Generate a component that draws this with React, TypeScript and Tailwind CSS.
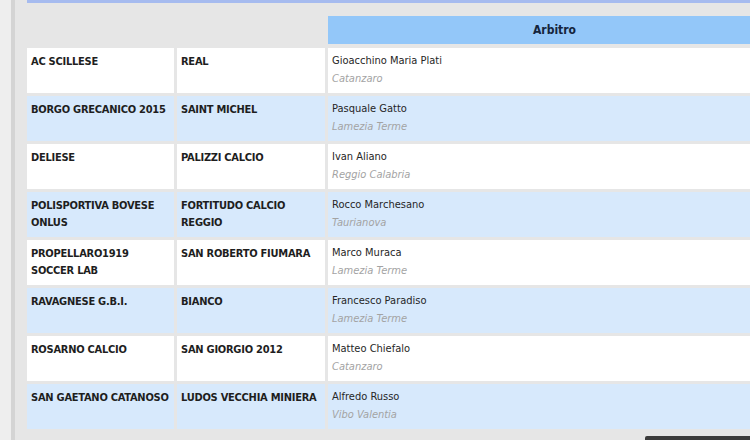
import React from "react";

const rows = [
  { home: ["AC SCILLESE"], away: ["REAL"], ref: "Gioacchino Maria Plati", city: "Catanzaro" },
  { home: ["BORGO GRECANICO 2015"], away: ["SAINT MICHEL"], ref: "Pasquale Gatto", city: "Lamezia Terme" },
  { home: ["DELIESE"], away: ["PALIZZI CALCIO"], ref: "Ivan Aliano", city: "Reggio Calabria" },
  { home: ["POLISPORTIVA BOVESE", "ONLUS"], away: ["FORTITUDO CALCIO", "REGGIO"], ref: "Rocco Marchesano", city: "Taurianova" },
  { home: ["PROPELLARO1919", "SOCCER LAB"], away: ["SAN ROBERTO FIUMARA"], ref: "Marco Muraca", city: "Lamezia Terme" },
  { home: ["RAVAGNESE G.B.I."], away: ["BIANCO"], ref: "Francesco Paradiso", city: "Lamezia Terme" },
  { home: ["ROSARNO CALCIO"], away: ["SAN GIORGIO 2012"], ref: "Matteo Chiefalo", city: "Catanzaro" },
  { home: ["SAN GAETANO CATANOSO"], away: ["LUDOS VECCHIA MINIERA"], ref: "Alfredo Russo", city: "Vibo Valentia" },
];

export default function App() {
  return (
    <div
      className="relative w-[750px] h-[440px] overflow-hidden flex bg-[#e6e6e6]"
      style={{ fontFamily: "'DejaVu Sans Condensed', 'DejaVu Sans', sans-serif" }}
    >
      <div className="w-[11px] shrink-0 bg-[#eeeeee]" />
      <div className="w-[4px] shrink-0 bg-[#d4d4d4]" />
      <div className="flex-1 pl-[12px] flex flex-col">
        <div className="h-[3px] w-[800px] bg-[#a6bbef]" />
        <div className="grid grid-cols-[147px_148px_453px] gap-x-[3px] gap-y-[3px] mt-[13px] w-[800px]">
          <div />
          <div />
          <div className="h-[28px] bg-[#93c7f9] flex items-center justify-center text-[12px] font-bold text-[#15253d] mb-[1px]">
            Arbitro
          </div>
          {rows.map((r, i) => {
            const bg = i % 2 === 0 ? "bg-white" : "bg-[#d7e9fc]";
            return (
              <React.Fragment key={i}>
                <div className={`${bg} h-[45px] pl-[4px] pt-[5px] text-[11px] leading-[17px] font-bold tracking-[-0.25px] text-[#1e1e1e]`}>
                  {r.home.map((t) => (
                    <div key={t}>{t}</div>
                  ))}
                </div>
                <div className={`${bg} h-[45px] pl-[4px] pt-[5px] text-[11px] leading-[17px] font-bold tracking-[-0.25px] text-[#1e1e1e]`}>
                  {r.away.map((t) => (
                    <div key={t}>{t}</div>
                  ))}
                </div>
                <div className={`${bg} h-[45px] pl-[4px] pt-[4px] text-[11px] leading-[18px]`}>
                  <div className="text-[#262626]">{r.ref}</div>
                  <div className="italic text-[#a3a3a3]">{r.city}</div>
                </div>
              </React.Fragment>
            );
          })}
        </div>
      </div>
      <div className="absolute left-[645px] top-[436px] w-[110px] h-[10px] bg-[#3b3b3b] rounded-t-[2px]" />
    </div>
  );
}
